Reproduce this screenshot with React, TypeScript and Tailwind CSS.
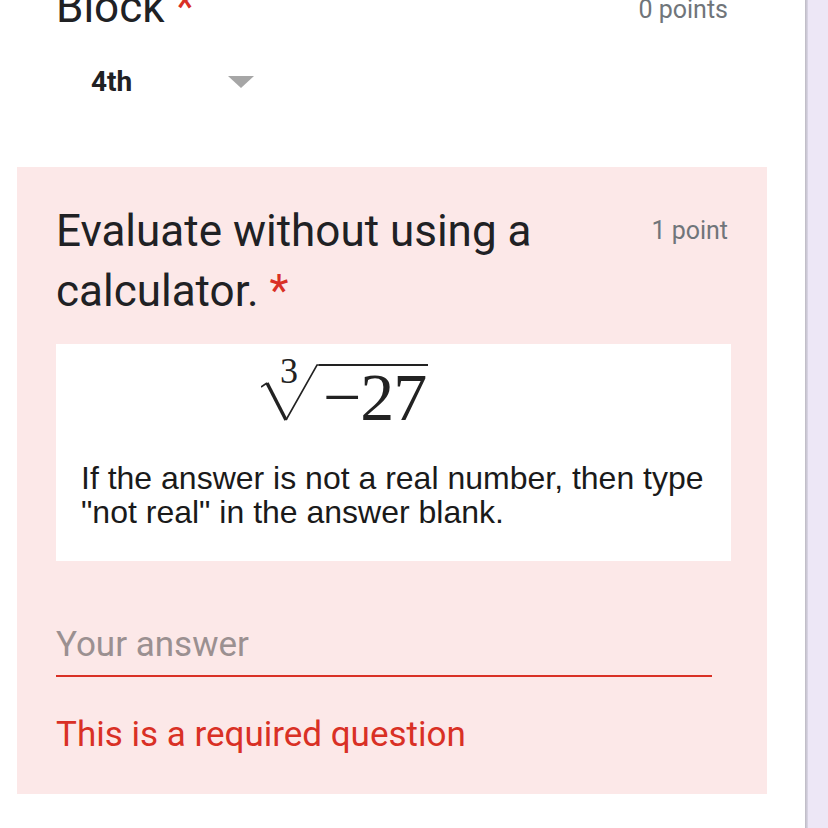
import React from "react";

const roboto = { fontFamily: "Roboto, 'Noto Sans', sans-serif" };

const App = () => {
  return (
    <div className="w-[828px] h-[828px] flex overflow-hidden bg-[#ede7f6]" style={roboto}>
      <div className="w-[805px] h-full bg-white flex flex-col">
        {/* Block question, top is cut off */}
        <div className="pl-[56px] pr-[77px] mt-[-23px] flex justify-between items-start">
          <h2 className="text-[44px] leading-[60px] text-[#202124]">
            Block <span className="text-[#d93025]">*</span>
          </h2>
          <span className="mt-[18px] text-[25px] leading-[30px] text-[#70757a]">0 points</span>
        </div>
        <div className="mt-[27px] pl-[91px] flex items-center">
          <span className="w-[137px] text-[28px] leading-[36px] font-bold text-[#202124]">4th</span>
          <svg width="26" height="12" viewBox="0 0 26 12">
            <polygon points="0,0 26,0 13,12" fill="#a6a6a6" />
          </svg>
        </div>

        {/* Evaluate question with error state */}
        <div className="mt-[67px] ml-[17px] w-[750px] bg-[#fce8e8] pt-[34px] pb-[39px] px-[39px]">
          <div className="flex justify-between items-start">
            <h2 className="w-[540px] text-[44px] leading-[60px] text-[#202124]">
              Evaluate without using a calculator. <span className="text-[#d93025]">*</span>
            </h2>
            <span className="mt-[15px] text-[25px] leading-[30px] text-[#70757a]">1 point</span>
          </div>

          <div className="mt-[23px] w-[675px] bg-white pt-[18px] pb-[32px]">
            <div className="pl-[205px] flex items-start">
              <div className="relative w-[58px] h-[60px]">
                <svg width="58" height="60" viewBox="0 0 58 60">
                  <path d="M0 25 L6 21" stroke="#222" strokeWidth="1.6" fill="none" />
                  <path d="M6 21 L25 58" stroke="#222" strokeWidth="3.4" fill="none" />
                  <path d="M25 58 L56 3 L58 3" stroke="#222" strokeWidth="1.6" fill="none" />
                </svg>
                <span
                  className="absolute left-[19px] top-[-9px] text-[36px] leading-none text-[#222]"
                  style={{ fontFamily: "'Liberation Serif', serif" }}
                >
                  3
                </span>
              </div>
              <span
                className="mt-[2px] border-t-2 border-[#222] text-[68px] leading-[62px] text-[#222] pl-[4px] pr-[2px] tracking-[-1px]"
                style={{ fontFamily: "'Liberation Serif', serif" }}
              >
                −27
              </span>
            </div>
            <p
              className="mt-[33px] pl-[25px] text-[32px] leading-[34px] text-[#1a1a1a]"
              style={{ fontFamily: "'Liberation Sans', Arial, sans-serif" }}
            >
              If the answer is not a real number, then type
              <br />
              "not real" in the answer blank.
            </p>
          </div>

          <div className="mt-[64px] w-[656px] border-b-2 border-[#d93025] pb-[10px]">
            <span className="block text-[35px] leading-[40px] text-[#9b9091]">Your answer</span>
          </div>
          <p className="mt-[38px] text-[35px] leading-[40px] text-[#d93025]">
            This is a required question
          </p>
        </div>
      </div>
      <div className="w-[3px] h-full bg-gradient-to-r from-[#bcb9c2] to-[#dcd8e8]" />
      <div className="flex-1 h-full bg-[#ede7f6]" />
    </div>
  );
};

export default App;
